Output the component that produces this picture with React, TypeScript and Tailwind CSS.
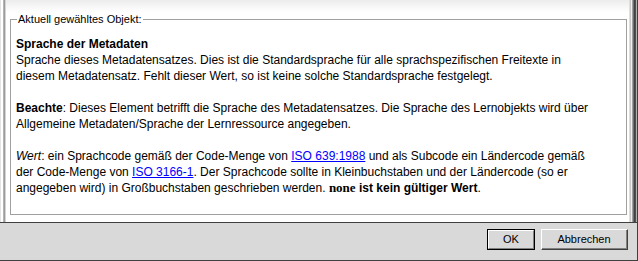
export default function App() {
  return (
    <div className="w-[638px] h-[261px] flex flex-col bg-white font-['Liberation_Sans',Arial,sans-serif] text-[12px] text-black overflow-hidden">
      <div className="h-[222px] flex">
        <div className="flex">
          <div className="w-px bg-[#e4e4e4]" />
          <div className="w-[2px] bg-white" />
          <div className="w-px bg-[#b4b4b4]" />
          <div className="w-px bg-[#9c9c9c]" />
          <div className="w-px bg-[#d4d4d4]" />
        </div>
        <div className="flex-1 flex flex-col bg-white">
          <div className="h-[12px] bg-gradient-to-b from-[#ececec] to-white" />
          <fieldset className="ml-[4px] mr-[2px] h-[203px] border border-[#a0a0a0] pl-[5px] pt-[10px]">
            <legend className="ml-[1px] px-[1px] leading-[14px] text-[11px]">Aktuell gewähltes Objekt:</legend>
            <div className="leading-[16px] whitespace-nowrap">
              <div>
                <div className="font-bold">Sprache der Metadaten</div>
                <div>Sprache dieses Metadatensatzes. Dies ist die Standardsprache für alle sprachspezifischen Freitexte in</div>
                <div>diesem Metadatensatz. Fehlt dieser Wert, so ist keine solche Standardsprache festgelegt.</div>
              </div>
              <div className="mt-[16px]">
                <div><span className="font-bold">Beachte</span>: Dieses Element betrifft die Sprache des Metadatensatzes. Die Sprache des Lernobjekts wird über</div>
                <div>Allgemeine Metadaten/Sprache der Lernressource angegeben.</div>
              </div>
              <div className="mt-[16px]">
                <div><span className="italic">Wert</span>: ein Sprachcode gemäß der Code-Menge von <a className="text-[#0000ff] underline" href="#">ISO 639:1988</a> und als Subcode ein Ländercode gemäß</div>
                <div>der Code-Menge von <a className="text-[#0000ff] underline" href="#">ISO 3166-1</a>. Der Sprachcode sollte in Kleinbuchstaben und der Ländercode (so er</div>
                <div>angegeben wird) in Großbuchstaben geschrieben werden. <span className="font-bold"><span className="font-['Liberation_Serif',serif] text-[13px]">none</span> ist kein gültiger Wert</span>.</div>
              </div>
            </div>
          </fieldset>
        </div>
        <div className="flex">
          <div className="w-px bg-[#e0e0e0]" />
          <div className="w-px bg-[#c8c8c8]" />
          <div className="w-px bg-[#f0f0f0]" />
          <div className="w-px bg-[#a0a0a0]" />
          <div className="w-px bg-[#707070]" />
          <div className="w-px bg-[#404040]" />
          <div className="w-px bg-[#505050]" />
          <div className="w-px bg-[#b0b0b0]" />
          <div className="w-px bg-[#404040]" />
        </div>
      </div>
      <div className="flex-1 flex items-start justify-end gap-[6px] pt-[6px] pr-[9px] bg-[#d9d9d9] border-t border-[#404040] border-b border-b-[#404040] border-r border-r-[#404040]">
        <button className="w-[48px] h-[21px] border border-black bg-[#d9d9d9] p-0">
          <div className="w-full h-full border-t border-l border-t-white border-l-white border-b border-r border-b-[#808080] border-r-[#808080] flex items-center justify-center text-[11px]">OK</div>
        </button>
        <button className="w-[87px] h-[21px] border-t border-l border-t-white border-l-white border-b border-r border-b-[#404040] border-r-[#404040] bg-[#d9d9d9] p-0">
          <div className="w-full h-full border-b border-r border-b-[#808080] border-r-[#808080] flex items-center justify-center text-[11px]">Abbrechen</div>
        </button>
      </div>
    </div>
  );
}
